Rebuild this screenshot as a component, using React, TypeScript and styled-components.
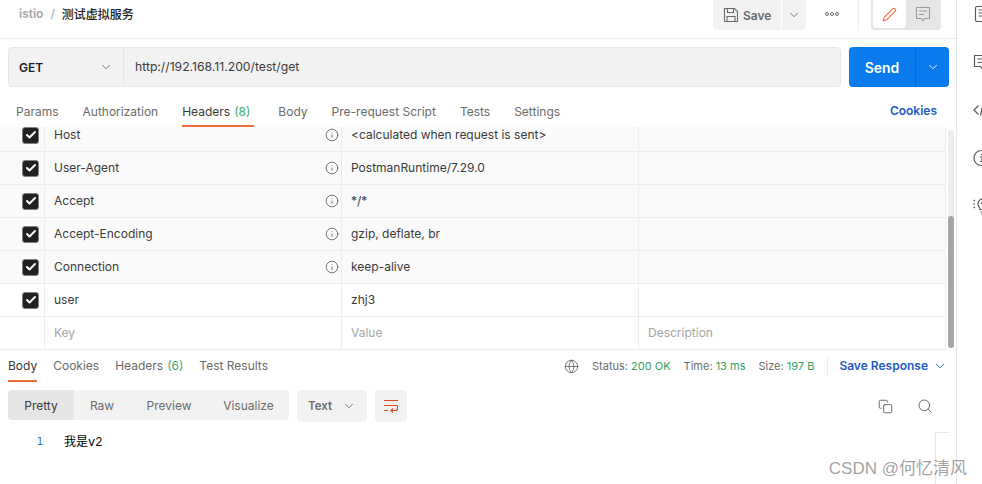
import React from 'react';
import styled, { createGlobalStyle } from 'styled-components';
import { FiChevronDown, FiCopy, FiSearch, FiGlobe, FiInfo, FiCheck, FiEdit2 } from 'react-icons/fi';

const GlobalStyle = createGlobalStyle`
  html, body {
    margin: 0;
    padding: 0;
    background: #fff;
    width: 982px;
    height: 484px;
    overflow: hidden;
    font-family: Inter, "Noto Sans CJK SC", sans-serif;
    font-size: 12px;
    color: #3a3a3a;
  }
  * { box-sizing: border-box; }
`;

const headerRows = [
  { key: 'Host', value: '<calculated when request is sent>', auto: true },
  { key: 'User-Agent', value: 'PostmanRuntime/7.29.0', auto: true },
  { key: 'Accept', value: '*/*', auto: true },
  { key: 'Accept-Encoding', value: 'gzip, deflate, br', auto: true },
  { key: 'Connection', value: 'keep-alive', auto: true },
  { key: 'user', value: 'zhj3', auto: false },
];

const App: React.FC = () => (
  <Page>
    <GlobalStyle />
    <Main>
      <TopBar>
        <Crumbs>
          <CrumbParent>istio</CrumbParent>
          <CrumbSep>/</CrumbSep>
          <CrumbTitle>测试虚拟服务</CrumbTitle>
        </Crumbs>
        <TopActions>
          <SaveButton>
            <svg width="16" height="16" viewBox="0 0 16 16" fill="none" stroke="#6b6b6b" strokeWidth="1.1">
              <path d="M1.5 1.5h10l3 3v10h-13z" />
              <path d="M4.5 1.5v4h6v-4M4 14.5v-5h8v5" />
            </svg>
            Save
          </SaveButton>
          <SaveCaret><FiChevronDown size={14} strokeWidth={1.5} /></SaveCaret>
          <MoreDots>
            <Dot /><Dot /><Dot />
          </MoreDots>
          <ActionDivider />
          <ModeSwitch>
            <ModeButton $active><FiEdit2 size={15} color="#f26b3a" strokeWidth={1.7} /></ModeButton>
            <ModeButton>
              <svg width="16" height="16" viewBox="0 0 16 16" fill="none" stroke="#9a9a9a" strokeWidth="1.1">
                <path d="M1.5 1.5h13v11h-5L8 14.5 6.5 12.5h-5z" />
                <path d="M4 5h8M4 8.5h5" />
              </svg>
            </ModeButton>
          </ModeSwitch>
        </TopActions>
      </TopBar>

      <RequestRow>
        <UrlBox>
          <MethodSelect>
            GET
            <FiChevronDown size={14} strokeWidth={1.5} color="#6b6b6b" />
          </MethodSelect>
          <UrlText>http://192.168.11.200/test/get</UrlText>
        </UrlBox>
        <SendButton>
          <SendLabel>Send</SendLabel>
          <SendCaret><FiChevronDown size={14} color="#fff" strokeWidth={1.6} /></SendCaret>
        </SendButton>
      </RequestRow>

      <RequestTabs>
        <Tab>Params</Tab>
        <Tab>Authorization</Tab>
        <Tab $active>Headers <Count>(8)</Count></Tab>
        <Tab>Body</Tab>
        <Tab>Pre-request Script</Tab>
        <Tab>Tests</Tab>
        <Tab>Settings</Tab>
        <CookiesLink>Cookies</CookiesLink>
      </RequestTabs>

      <TableArea>
        <TableViewport>
          <HeaderTable>
            {headerRows.map(row => (
              <Row key={row.key} $auto={row.auto}>
                <CheckCell>
                  <CheckBox><FiCheck size={12} color="#fff" strokeWidth={4} /></CheckBox>
                </CheckCell>
                <KeyCell>
                  {row.key}
                  {row.auto && <FiInfo size={14} color="#5a5a5a" strokeWidth={1.4} />}
                </KeyCell>
                <ValueCell>{row.value}</ValueCell>
                <DescCell />
              </Row>
            ))}
            <Row $auto={false}>
              <CheckCell />
              <KeyCell $placeholder>Key</KeyCell>
              <ValueCell $placeholder>Value</ValueCell>
              <DescCell $placeholder>Description</DescCell>
            </Row>
          </HeaderTable>
        </TableViewport>
        <ScrollTrack><ScrollThumb /></ScrollTrack>
      </TableArea>

      <ResponseBar>
        <ResponseTabs>
          <ResponseTab $active>Body</ResponseTab>
          <ResponseTab>Cookies</ResponseTab>
          <ResponseTab>Headers <Count>(6)</Count></ResponseTab>
          <ResponseTab>Test Results</ResponseTab>
        </ResponseTabs>
        <ResponseMeta>
          <FiGlobe size={15} color="#5a5a5a" strokeWidth={1.3} />
          <MetaItem>Status: <MetaValue>200 OK</MetaValue></MetaItem>
          <MetaItem>Time: <MetaValue>13 ms</MetaValue></MetaItem>
          <MetaItem>Size: <MetaValue>197 B</MetaValue></MetaItem>
          <MetaDivider />
          <SaveResponse>
            Save Response
            <FiChevronDown size={14} strokeWidth={1.6} />
          </SaveResponse>
        </ResponseMeta>
      </ResponseBar>

      <BodyToolbar>
        <ViewGroup>
          <ViewOption $active $width={66}>Pretty</ViewOption>
          <ViewOption $width={56}>Raw</ViewOption>
          <ViewOption $width={78}>Preview</ViewOption>
          <ViewOption $width={81}>Visualize</ViewOption>
        </ViewGroup>
        <FormatSelect>
          Text
          <FiChevronDown size={14} strokeWidth={1.5} color="#6b6b6b" />
        </FormatSelect>
        <WrapButton>
          <svg width="16" height="16" viewBox="0 0 16 16" fill="none" stroke="#d9481c" strokeWidth="1.1">
            <path d="M1 2.5h14M1 7.5h13M1 12.5h4" />
            <path d="M14.5 7.5v3a2 2 0 0 1-2 2H8M10 10.5l-2 2 2 2" />
          </svg>
        </WrapButton>
        <ToolbarIcons>
          <FiCopy size={15} color="#5a5a5a" strokeWidth={1.4} />
          <FiSearch size={16} color="#5a5a5a" strokeWidth={1.4} />
        </ToolbarIcons>
      </BodyToolbar>

      <CodeLine>
        <LineNumber>1</LineNumber>
        <CodeText>我是v2</CodeText>
      </CodeLine>
      <Minimap />
    </Main>

    <SideBar>
      <svg width="18" height="18" viewBox="0 0 18 18" fill="none" stroke="#5a5a5a" strokeWidth="1.2">
        <rect x="2.5" y="1.5" width="14" height="15" rx="1.5" />
        <path d="M5.5 5h8M5.5 8h8M5.5 11h8" />
      </svg>
      <svg width="18" height="18" viewBox="0 0 18 18" fill="none" stroke="#5a5a5a" strokeWidth="1.2">
        <path d="M1.5 2.5h15v11h-6l-1.5 2-1.5-2h-6z" />
        <path d="M4.5 6h9M4.5 9.5h6" />
      </svg>
      <svg width="18" height="18" viewBox="0 0 18 18" fill="none" stroke="#5a5a5a" strokeWidth="1.2">
        <path d="M5.5 4.5L1 9l4.5 4.5M10 3.5L7.5 14.5M12.5 4.5L17 9l-4.5 4.5" />
      </svg>
      <svg width="18" height="18" viewBox="0 0 18 18" fill="none" stroke="#5a5a5a" strokeWidth="1.2">
        <circle cx="8.5" cy="9" r="7.5" />
        <path d="M7 8h2v4.5M7 12.5h4M8.6 5v1" />
      </svg>
      <svg width="18" height="18" viewBox="0 0 18 18" fill="none" stroke="#5a5a5a" strokeWidth="1.2">
        <path d="M7 12.5c0-2-2-3-2-6a4.5 4.5 0 0 1 9 0c0 3-2 4-2 6zM7.5 15h4M8.5 17h2" />
        <path d="M0.5 3l1.5 1M0 7h2M0.5 11l1.5-1" />
        <path d="M8 7l1.5-2 1 2 1.5-2" />
      </svg>
    </SideBar>

    <Watermark>CSDN @何忆清风</Watermark>
  </Page>
);

const Page = styled.div`
  position: relative;
  display: flex;
  width: 982px;
  height: 484px;
  overflow: hidden;
`;

const Main = styled.div`
  position: relative;
  width: 957px;
  height: 484px;
  border-right: 1px solid #e6e6e6;
  flex-shrink: 0;
`;

const TopBar = styled.div`
  height: 39px;
  display: flex;
  align-items: flex-start;
  justify-content: space-between;
  padding: 0 15px 0 19px;
  border-bottom: 1px solid #ededed;
`;

const Crumbs = styled.div`
  display: flex;
  align-items: center;
  gap: 7px;
  height: 27px;
  font-size: 12px;
`;

const CrumbParent = styled.span`
  color: #a6a6a6;
  font-weight: 600;
`;

const CrumbSep = styled.span`
  color: #a6a6a6;
`;

const CrumbTitle = styled.span`
  color: #212121;
  font-weight: 500;
`;

const TopActions = styled.div`
  display: flex;
  align-items: flex-start;
`;

const SaveButton = styled.div`
  display: flex;
  align-items: center;
  gap: 4px;
  width: 68px;
  height: 30px;
  padding-left: 10px;
  background: #f2f2f2;
  border-radius: 0 0 0 4px;
  color: #6b6b6b;
  font-weight: 600;
`;

const SaveCaret = styled.div`
  display: flex;
  align-items: center;
  justify-content: center;
  width: 24px;
  height: 30px;
  margin-left: 1px;
  background: #f2f2f2;
  border-radius: 0 0 4px 0;
  color: #6b6b6b;
`;

const MoreDots = styled.div`
  display: flex;
  align-items: center;
  justify-content: center;
  gap: 1px;
  width: 52px;
  height: 28px;
`;

const Dot = styled.span`
  width: 4px;
  height: 4px;
  border: 1px solid #6b6b6b;
  border-radius: 50%;
`;

const ActionDivider = styled.div`
  width: 1px;
  height: 30px;
  margin-right: 12px;
  background: #ededed;
`;

const ModeSwitch = styled.div`
  display: flex;
  width: 70px;
  height: 30px;
  padding: 0 2px 2px;
  background: #e6e6e6;
  border-radius: 0 0 4px 4px;
`;

const ModeButton = styled.div<{ $active?: boolean }>`
  display: flex;
  align-items: center;
  justify-content: center;
  width: 33px;
  background: ${props => (props.$active ? '#fff' : 'transparent')};
  border-radius: 0 0 3px 3px;
`;

const RequestRow = styled.div`
  display: flex;
  gap: 8px;
  padding: 8px 7px 0 8px;
`;

const UrlBox = styled.div`
  display: flex;
  width: 833px;
  height: 40px;
  background: #f2f2f2;
  border: 1px solid #e6e6e6;
  border-radius: 4px;
`;

const MethodSelect = styled.div`
  display: flex;
  align-items: center;
  justify-content: space-between;
  width: 115px;
  padding: 0 10px;
  border-right: 1px solid #e6e6e6;
  color: #212121;
  font-weight: 600;
`;

const UrlText = styled.div`
  display: flex;
  align-items: center;
  padding: 0 0 1px 11px;
  color: #3a3a3a;
  font-size: 12.2px;
`;

const SendButton = styled.div`
  display: flex;
  width: 100px;
  height: 40px;
  background: #097bed;
  border-radius: 4px;
`;

const SendLabel = styled.div`
  display: flex;
  align-items: center;
  justify-content: center;
  width: 67px;
  border-right: 1px solid #0868c9;
  color: #fff;
  font-size: 14px;
  font-weight: 600;
`;

const SendCaret = styled.div`
  display: flex;
  align-items: center;
  justify-content: center;
  flex: 1;
`;

const RequestTabs = styled.div`
  display: flex;
  align-items: stretch;
  gap: 24px;
  height: 40px;
  padding: 0 19px 0 16px;
`;

const Tab = styled.div<{ $active?: boolean }>`
  display: flex;
  align-items: center;
  gap: 4px;
  color: ${props => (props.$active ? '#3a3a3a' : '#6b6b6b')};
  border-bottom: 2px solid ${props => (props.$active ? '#f26b3a' : 'transparent')};
  padding: 12px ${props => (props.$active ? '4px' : '0')} 2px 0;
`;

const Count = styled.span`
  color: #0a8f4a;
  opacity: 0.8;
`;

const CookiesLink = styled.div`
  display: flex;
  align-items: center;
  margin-left: auto;
  padding: 12px 0 5px;
  color: #1d5bc4;
  font-weight: 600;
`;

const TableArea = styled.div`
  display: flex;
  align-items: stretch;
  height: 223px;
`;

const TableViewport = styled.div`
  width: 946px;
  overflow: hidden;
`;

const HeaderTable = styled.div`
  margin-top: -8px;
`;

const Row = styled.div<{ $auto: boolean }>`
  display: grid;
  grid-template-columns: 45px 297px 297px 1fr;
  height: 33px;
  background: ${props => (props.$auto ? '#fafafa' : '#fff')};
  border-bottom: 1px solid #ededed;
  border-right: 1px solid #ededed;
`;

const CheckCell = styled.div`
  display: flex;
  align-items: center;
  justify-content: flex-end;
  padding-right: 5px;
  border-right: 1px solid #ededed;
`;

const CheckBox = styled.div`
  display: flex;
  align-items: center;
  justify-content: center;
  width: 17px;
  height: 17px;
  background: #212121;
  border: 1px solid #808080;
  border-radius: 3px;
`;

const Cell = styled.div<{ $placeholder?: boolean }>`
  display: flex;
  align-items: center;
  justify-content: space-between;
  padding: 0 2px 2px 9px;
  border-right: 1px solid #ededed;
  color: ${props => (props.$placeholder ? '#a6a6a6' : '#3a3a3a')};
  svg { margin-top: 2px; }
`;

const KeyCell = styled(Cell)``;

const ValueCell = styled(Cell)``;

const DescCell = styled(Cell)`
  border-right: none;
`;

const ScrollTrack = styled.div`
  position: relative;
  width: 6px;
  margin: 3px 0 2px 2px;
  background: #ededed;
  border-radius: 3px;
`;

const ScrollThumb = styled.div`
  position: absolute;
  left: 0;
  right: 0;
  top: 86px;
  bottom: 0;
  background: #a6a6a6;
  border-radius: 3px;
`;

const ResponseBar = styled.div`
  display: flex;
  justify-content: space-between;
  height: 32px;
  padding: 0 9px 0 8px;
`;

const ResponseTabs = styled.div`
  display: flex;
  gap: 16px;
`;

const ResponseTab = styled.div<{ $active?: boolean }>`
  display: flex;
  align-items: center;
  gap: 4px;
  padding-top: 1px;
  color: ${props => (props.$active ? '#3a3a3a' : '#6b6b6b')};
  border-bottom: 2px solid ${props => (props.$active ? '#f26b3a' : 'transparent')};
`;

const ResponseMeta = styled.div`
  display: flex;
  align-items: center;
  gap: 13px;
  font-size: 11px;
  color: #6b6b6b;
`;

const MetaItem = styled.span``;

const MetaValue = styled.span`
  color: #0a8f4a;
  opacity: 0.85;
`;

const MetaDivider = styled.div`
  width: 1px;
  height: 20px;
  background: #ededed;
`;

const SaveResponse = styled.div`
  display: flex;
  align-items: center;
  gap: 5px;
  padding-bottom: 1px;
  color: #1d5bc4;
  font-size: 12px;
  font-weight: 600;
  margin-left: -2px;
`;

const BodyToolbar = styled.div`
  display: flex;
  align-items: flex-start;
  gap: 8px;
  padding: 8px 23px 0 8px;
`;

const ViewGroup = styled.div`
  display: flex;
  height: 30px;
  background: #f2f2f2;
  border-radius: 4px;
  overflow: hidden;
`;

const ViewOption = styled.div<{ $active?: boolean; $width: number }>`
  display: flex;
  align-items: center;
  justify-content: center;
  width: ${props => props.$width}px;
  background: ${props => (props.$active ? '#e6e6e6' : 'transparent')};
  color: ${props => (props.$active ? '#3a3a3a' : '#6b6b6b')};
`;

const FormatSelect = styled.div`
  display: flex;
  align-items: center;
  justify-content: space-between;
  width: 70px;
  height: 32px;
  padding: 0 11px;
  background: #f2f2f2;
  border-radius: 4px;
  color: #6b6b6b;
  font-size: 11.5px;
  font-weight: 600;
`;

const WrapButton = styled.div`
  display: flex;
  align-items: center;
  justify-content: center;
  width: 32px;
  height: 32px;
  background: #f2f2f2;
  border-radius: 4px;
`;

const ToolbarIcons = styled.div`
  display: flex;
  align-items: center;
  gap: 24px;
  height: 32px;
  margin-left: auto;
`;

const CodeLine = styled.div`
  display: flex;
  align-items: center;
  height: 20px;
  margin-top: 9px;
  font-family: "Liberation Mono", "Noto Sans CJK SC", monospace;
  font-size: 12px;
`;

const LineNumber = styled.span`
  width: 43px;
  text-align: right;
  color: #2f7da8;
  font-family: "DejaVu Sans Mono", monospace;
  font-size: 11px;
`;

const CodeText = styled.span`
  margin-left: 21px;
  color: #000;
`;

const Minimap = styled.div`
  position: absolute;
  right: 7px;
  top: 432px;
  width: 14px;
  height: 52px;
  border-top: 1px solid #e6e6e6;
  border-left: 1px solid #e6e6e6;
`;

const SideBar = styled.div`
  display: flex;
  flex-direction: column;
  gap: 30px;
  padding: 5px 0 0 16px;
  svg { flex-shrink: 0; }
`;

const Watermark = styled.div`
  position: absolute;
  right: 15px;
  top: 454px;
  font-size: 17px;
  color: rgba(120, 120, 120, 0.7);
  font-family: "Liberation Sans", "Noto Sans CJK SC", sans-serif;
`;

export default App;
